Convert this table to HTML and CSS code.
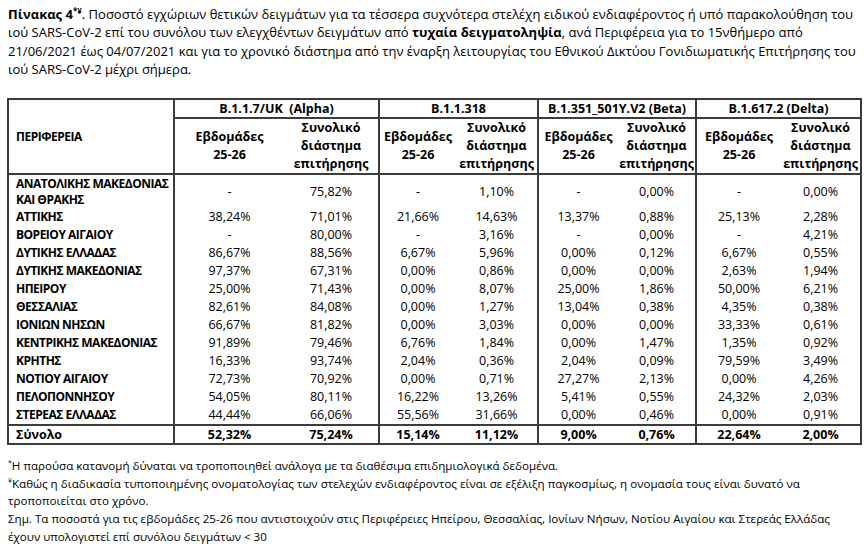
FILE: index.html
```html
<!DOCTYPE html>
<html lang="el">
<head>
<meta charset="utf-8">
<title>Πίνακας 4</title>
<link rel="stylesheet" href="styles.css">
</head>
<body>
<main class="page">
  <p class="caption"><b>Πίνακας 4<sup>*¥</sup></b>. Ποσοστό εγχώριων θετικών δειγμάτων για τα τέσσερα συχνότερα στελέχη ειδικού ενδιαφέροντος ή υπό παρακολούθηση του<br>ιού SARS-CoV-2 επί του συνόλου των ελεγχθέντων δειγμάτων από <b>τυχαία δειγματοληψία</b>, ανά Περιφέρεια για το 15νθήμερο από<br>21/06/2021 έως 04/07/2021 και για το χρονικό διάστημα από την έναρξη λειτουργίας του Εθνικού Δικτύου Γονιδιωματικής Επιτήρησης του<br>ιού SARS-CoV-2 μέχρι σήμερα.</p>

  <table class="data">
    <colgroup>
      <col class="c-region">
      <col class="c-a1"><col class="c-a2">
      <col class="c-b1"><col class="c-b2">
      <col class="c-c1"><col class="c-c2">
      <col class="c-d1"><col class="c-d2">
    </colgroup>
    <thead>
      <tr class="h1">
        <th class="region" rowspan="2">ΠΕΡΙΦΕΡΕΙΑ</th>
        <th colspan="2" class="grp">B.1.1.7/UK&nbsp; (Alpha)</th>
        <th colspan="2" class="grp">B.1.1.318</th>
        <th colspan="2" class="grp">B.1.351_501Y.V2 (Beta)</th>
        <th colspan="2" class="grp">B.1.617.2 (Delta)</th>
      </tr>
      <tr class="h2">
        <th class="wk">Εβδομάδες<br>25-26</th><th class="tot g-end">Συνολικό<br>διάστημα<br>επιτήρησης</th>
        <th class="wk">Εβδομάδες<br>25-26</th><th class="tot g-end">Συνολικό<br>διάστημα<br>επιτήρησης</th>
        <th class="wk">Εβδομάδες<br>25-26</th><th class="tot g-end">Συνολικό<br>διάστημα<br>επιτήρησης</th>
        <th class="wk">Εβδομάδες<br>25-26</th><th class="tot g-end">Συνολικό<br>διάστημα<br>επιτήρησης</th>
      </tr>
    </thead>
    <tbody>
      <tr class="first">
        <th class="region two">ΑΝΑΤΟΛΙΚΗΣ ΜΑΚΕΔΟΝΙΑΣ<br>ΚΑΙ ΘΡΑΚΗΣ</th>
        <td>-</td><td class="g-end">75,82%</td><td>-</td><td class="g-end">1,10%</td><td>-</td><td class="g-end">0,00%</td><td>-</td><td class="g-end">0,00%</td>
      </tr>
      <tr><th class="region">ΑΤΤΙΚΗΣ</th><td>38,24%</td><td class="g-end">71,01%</td><td>21,66%</td><td class="g-end">14,63%</td><td>13,37%</td><td class="g-end">0,88%</td><td>25,13%</td><td class="g-end">2,28%</td></tr>
      <tr><th class="region">ΒΟΡΕΙΟΥ ΑΙΓΑΙΟΥ</th><td>-</td><td class="g-end">80,00%</td><td>-</td><td class="g-end">3,16%</td><td>-</td><td class="g-end">0,00%</td><td>-</td><td class="g-end">4,21%</td></tr>
      <tr><th class="region">ΔΥΤΙΚΗΣ ΕΛΛΑΔΑΣ</th><td>86,67%</td><td class="g-end">88,56%</td><td>6,67%</td><td class="g-end">5,96%</td><td>0,00%</td><td class="g-end">0,12%</td><td>6,67%</td><td class="g-end">0,55%</td></tr>
      <tr><th class="region">ΔΥΤΙΚΗΣ ΜΑΚΕΔΟΝΙΑΣ</th><td>97,37%</td><td class="g-end">67,31%</td><td>0,00%</td><td class="g-end">0,86%</td><td>0,00%</td><td class="g-end">0,00%</td><td>2,63%</td><td class="g-end">1,94%</td></tr>
      <tr><th class="region">ΗΠΕΙΡΟΥ</th><td>25,00%</td><td class="g-end">71,43%</td><td>0,00%</td><td class="g-end">8,07%</td><td>25,00%</td><td class="g-end">1,86%</td><td>50,00%</td><td class="g-end">6,21%</td></tr>
      <tr><th class="region">ΘΕΣΣΑΛΙΑΣ</th><td>82,61%</td><td class="g-end">84,08%</td><td>0,00%</td><td class="g-end">1,27%</td><td>13,04%</td><td class="g-end">0,38%</td><td>4,35%</td><td class="g-end">0,38%</td></tr>
      <tr><th class="region">ΙΟΝΙΩΝ ΝΗΣΩΝ</th><td>66,67%</td><td class="g-end">81,82%</td><td>0,00%</td><td class="g-end">3,03%</td><td>0,00%</td><td class="g-end">0,00%</td><td>33,33%</td><td class="g-end">0,61%</td></tr>
      <tr><th class="region">ΚΕΝΤΡΙΚΗΣ ΜΑΚΕΔΟΝΙΑΣ</th><td>91,89%</td><td class="g-end">79,46%</td><td>6,76%</td><td class="g-end">1,84%</td><td>0,00%</td><td class="g-end">1,47%</td><td>1,35%</td><td class="g-end">0,92%</td></tr>
      <tr><th class="region">ΚΡΗΤΗΣ</th><td>16,33%</td><td class="g-end">93,74%</td><td>2,04%</td><td class="g-end">0,36%</td><td>2,04%</td><td class="g-end">0,09%</td><td>79,59%</td><td class="g-end">3,49%</td></tr>
      <tr><th class="region">ΝΟΤΙΟΥ ΑΙΓΑΙΟΥ</th><td>72,73%</td><td class="g-end">70,92%</td><td>0,00%</td><td class="g-end">0,71%</td><td>27,27%</td><td class="g-end">2,13%</td><td>0,00%</td><td class="g-end">4,26%</td></tr>
      <tr><th class="region">ΠΕΛΟΠΟΝΝΗΣΟΥ</th><td>54,05%</td><td class="g-end">80,11%</td><td>16,22%</td><td class="g-end">13,26%</td><td>5,41%</td><td class="g-end">0,55%</td><td>24,32%</td><td class="g-end">2,03%</td></tr>
      <tr><th class="region">ΣΤΕΡΕΑΣ ΕΛΛΑΔΑΣ</th><td>44,44%</td><td class="g-end">66,06%</td><td>55,56%</td><td class="g-end">31,66%</td><td>0,00%</td><td class="g-end">0,46%</td><td>0,00%</td><td class="g-end">0,91%</td></tr>
    </tbody>
    <tfoot>
      <tr class="total"><th class="region">Σύνολο</th><td>52,32%</td><td class="g-end">75,24%</td><td>15,14%</td><td class="g-end">11,12%</td><td>9,00%</td><td class="g-end">0,76%</td><td>22,64%</td><td class="g-end">2,00%</td></tr>
    </tfoot>
  </table>

  <div class="notes">
    <p><sup>*</sup>Η παρούσα κατανομή δύναται να τροποποιηθεί ανάλογα με τα διαθέσιμα επιδημιολογικά δεδομένα.</p>
    <p><sup>¥</sup>Καθώς η διαδικασία τυποποιημένης ονοματολογίας των στελεχών ενδιαφέροντος είναι σε εξέλιξη παγκοσμίως, η ονομασία τους είναι δυνατό να<br>τροποποιείται στο χρόνο.</p>
    <p>Σημ. Τα ποσοστά για τις εβδομάδες 25-26 που αντιστοιχούν στις Περιφέρειες Ηπείρου, Θεσσαλίας, Ιονίων Νήσων, Νοτίου Αιγαίου και Στερεάς Ελλάδας<br>έχουν υπολογιστεί επί συνόλου δειγμάτων &lt; 30</p>
  </div>
</main>
</body>
</html>
```

FILE: styles.css
```css
html, body {
  margin: 0;
  padding: 0;
  background: #ffffff;
}

body {
  font-family: "Open Sans", "Noto Sans", sans-serif;
  font-size: 12.5px;
  color: #000;
}

.page {
  display: flex;
  flex-direction: column;
  padding: 5px 0 0 8px;
  width: 860px;
  box-sizing: border-box;
}

.caption {
  margin: 0;
  font-size: 13px;
  line-height: 18.3px;
  white-space: nowrap;
}

.caption sup {
  font-size: 8px;
  line-height: 0;
  vertical-align: 5px;
}

.data {
  margin: 20px 0 0 -1px;
  border-collapse: collapse;
  table-layout: fixed;
  width: 853px;
  border: 2px solid #3c3c3c;
}

.c-region { width: 166px; }
.c-a1 { width: 110px; }
.c-a2 { width: 95px; }
.c-b1 { width: 77px; }
.c-b2 { width: 82px; }
.c-c1 { width: 80px; }
.c-c2 { width: 78px; }
.c-d1 { width: 85px; }
.c-d2 { width: 80px; }

.data th,
.data td {
  padding: 0;
  text-align: center;
  vertical-align: middle;
  white-space: nowrap;
}

.data th {
  font-weight: 700;
}

.data .region {
  text-align: left;
  padding-left: 7px;
  font-size: 12px;
  letter-spacing: -0.5px;
  border-right: 2px solid #3c3c3c;
}

.h1 th {
  height: 17px;
  line-height: 17px;
}

.h1 .grp {
  border-left: 2px solid #3c3c3c;
  border-right: 2px solid #3c3c3c;
  border-bottom: 2px solid #3c3c3c;
}

.h2 th {
  height: 52px;
  line-height: 18px;
  border-bottom: 2px solid #3c3c3c;
}

.h1 .region {
  border-bottom: 2px solid #3c3c3c;
}

.g-end {
  border-right: 2px solid #3c3c3c;
}

tbody td,
tbody th {
  height: 18px;
  line-height: 18px;
}

tbody tr.first th,
tbody tr.first td {
  height: 33px;
}

.data .region.two {
  line-height: 16px;
}

.data .total th,
.data .total td {
  height: 17px;
  line-height: 17px;
  font-weight: 700;
  border-top: 2px solid #3c3c3c;
}

.data .total .region {
  font-size: 12.5px;
  letter-spacing: 0;
}

.notes {
  margin-top: 12px;
  font-size: 11.6px;
  line-height: 17.6px;
  white-space: nowrap;
}

.notes p {
  margin: 0;
}

.notes sup {
  font-size: 7px;
  line-height: 0;
  vertical-align: 5px;
}
```
